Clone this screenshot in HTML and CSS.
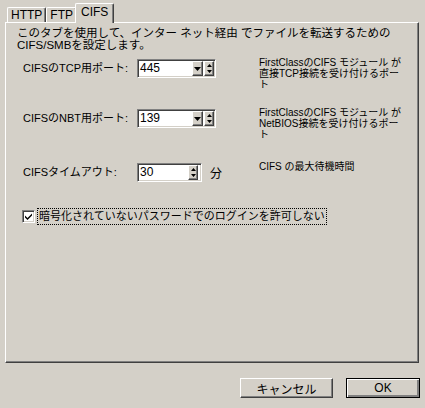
FILE: index.html
```html
<!DOCTYPE html>
<html lang="ja">
<head>
  <meta charset="UTF-8" />
  <title>CIFS</title>
  <link rel="stylesheet" href="styles.css">
</head>
<body>

  <div class="dialog">
    <!-- Tab strip -->
    <div class="tabs">
      <div class="tab">HTTP</div>
      <div class="tab">FTP</div>
      <div class="tab active">CIFS</div>
    </div>

    <div class="panel">
      <p class="intro">このタブを使用して、インター ネット経由 でファイルを転送するための<br>CIFS/SMBを設定します。</p>

      <div class="row row-tcp">
        <span class="label">CIFSのTCP用ポート:</span>
        <div class="spin">
          <span class="value">445</span>
          <span class="sbtn drop">
            <svg viewBox="0 0 7 4" width="7" height="4"><path d="M0 0h7L3.5 4z"/></svg>
          </span>
          <span class="sbtn updown">
            <svg viewBox="0 0 5 9" width="5" height="9"><path d="M2.5 0L5 3H0z M0 6h5L2.5 9z"/></svg>
          </span>
        </div>
        <p class="desc">FirstClassのCIFS モジュール が<br>直接TCP接続を受け付けるポー<br>ト</p>
      </div>

      <div class="row row-nbt">
        <span class="label">CIFSのNBT用ポート:</span>
        <div class="spin">
          <span class="value">139</span>
          <span class="sbtn drop">
            <svg viewBox="0 0 7 4" width="7" height="4"><path d="M0 0h7L3.5 4z"/></svg>
          </span>
          <span class="sbtn updown">
            <svg viewBox="0 0 5 9" width="5" height="9"><path d="M2.5 0L5 3H0z M0 6h5L2.5 9z"/></svg>
          </span>
        </div>
        <p class="desc">FirstClassのCIFS モジュール が<br>NetBIOS接続を受け付けるポー<br>ト</p>
      </div>

      <div class="row row-timeout">
        <span class="label">CIFSタイムアウト:</span>
        <div class="timeout-ctl">
          <div class="spin short">
            <span class="value">30</span>
            <span class="sbtn updown">
              <svg viewBox="0 0 5 9" width="5" height="9"><path d="M2.5 0L5 3H0z M0 6h5L2.5 9z"/></svg>
            </span>
          </div>
          <span class="unit">分</span>
        </div>
        <p class="desc">CIFS の最大待機時間</p>
      </div>

      <div class="check-row">
        <span class="checkbox">
          <svg viewBox="0 0 7 7" width="7" height="7"><path d="M0 2.5l2.5 2.5L7 0.5v2L2.5 7 0 4.5z"/></svg>
        </span>
        <span class="check-label">暗号化されていないパスワードでのログインを許可しない</span>
      </div>
    </div>

    <div class="actions">
      <button class="btn cancel">キャンセル</button>
      <button class="btn ok">OK</button>
    </div>
  </div>

</body>
</html>
```

FILE: styles.css
```css
* { box-sizing: border-box; }
body {
  margin: 0;
  background: #d4d0c8;
  color: #000;
  font-family: "Liberation Sans", "Noto Sans CJK JP", sans-serif;
  font-size: 11px;
}
.dialog {
  width: 425px;
  height: 408px;
}

/* Tabs */
.tabs {
  display: flex;
  align-items: flex-end;
  height: 22px;
  padding-left: 7px;
}
.tab {
  height: 15px;
  padding: 0 3px;
  border-top: 1px solid #fff;
  border-left: 1px solid #fff;
  border-right: 1px solid #404040;
  border-radius: 2px 2px 0 0;
  box-shadow: inset -1px 0 #808080;
  font-size: 12px;
  line-height: 14px;
}
.tab.active {
  position: relative;
  z-index: 1;
  height: 20px;
  margin: 0 0 -1px -2px;
  padding: 0 5px;
  background: #d4d0c8;
  line-height: 16px;
}

/* Panel */
.panel {
  width: 414px;
  height: 341px;
  margin-left: 5px;
  padding: 4px 0 0 11px;
  border: 1px solid;
  border-color: #fff #404040 #404040 #fff;
  box-shadow: inset -1px -1px #808080;
}
.intro {
  margin: 0;
  font-size: 11.5px;
  line-height: 12px;
  white-space: nowrap;
}

/* Setting rows */
.row {
  display: grid;
  grid-template-columns: 114px 122px 1fr;
  align-items: start;
  margin-left: 6px;
}
.row-tcp { height: 50px; margin-top: 6px; }
.row-nbt { height: 54px; }
.row-timeout { height: 47px; }
.label {
  margin-top: 2px;
  line-height: 19px;
  white-space: nowrap;
}
.desc {
  margin: 0;
  font-size: 10px;
  line-height: 11px;
  white-space: nowrap;
}

.spin {
  display: flex;
  align-items: center;
  width: 79px;
  height: 19px;
  margin-top: 2px;
  padding: 0 1px 0 2px;
  background: #fff;
  border: 1px solid;
  border-color: #808080 #fff #fff #808080;
  box-shadow: inset 1px 1px #404040, inset -1px -1px #d4d0c8;
}
.spin.short {
  width: 65px;
  margin-top: 0;
  padding-right: 3px;
}
.value {
  font-size: 12px;
  line-height: 15px;
}
.sbtn {
  display: flex;
  align-items: center;
  justify-content: center;
  width: 11px;
  height: 15px;
  background: #d4d0c8;
  border: 1px solid;
  border-color: #fff #404040 #404040 #fff;
  box-shadow: inset -1px -1px #808080;
}
.sbtn.drop { margin-left: auto; }
.sbtn.updown { width: 10px; margin-left: 1px; }
.spin.short .sbtn.updown { margin-left: auto; }
.sbtn svg { display: block; fill: #000; }

.timeout-ctl {
  display: flex;
  align-items: center;
  gap: 8px;
  margin-top: 2px;
}
.unit {
  font-size: 12px;
}

/* Checkbox */
.check-row {
  display: flex;
  align-items: center;
  gap: 2px;
  margin-left: 5px;
}
.checkbox {
  display: flex;
  align-items: center;
  justify-content: center;
  width: 13px;
  height: 13px;
  background: #fff;
  border: 1px solid;
  border-color: #808080 #fff #fff #808080;
  box-shadow: inset 1px 1px #404040, inset -1px -1px #d4d0c8;
}
.checkbox svg { display: block; fill: #000; }
.check-label {
  padding: 0 1px;
  line-height: 15px;
  font-size: 11px;
  border: 1px dotted #000;
  white-space: nowrap;
}

/* Buttons */
.actions {
  display: flex;
  justify-content: flex-end;
  gap: 13px;
  margin-top: 15px;
  padding-right: 5px;
}
.btn {
  height: 20px;
  margin: 0;
  padding: 0;
  background: #d4d0c8;
  color: #000;
  font-family: "Liberation Sans", "Noto Sans CJK JP", sans-serif;
  font-size: 12px;
  border: 1px solid;
  border-color: #fff #404040 #404040 #fff;
  box-shadow: inset -1px -1px #808080;
}
.btn.cancel { width: 93px; }
.btn.ok {
  width: 74px;
  border-color: #000;
  box-shadow: inset 1px 1px #fff, inset -2px -2px #808080;
}
```
